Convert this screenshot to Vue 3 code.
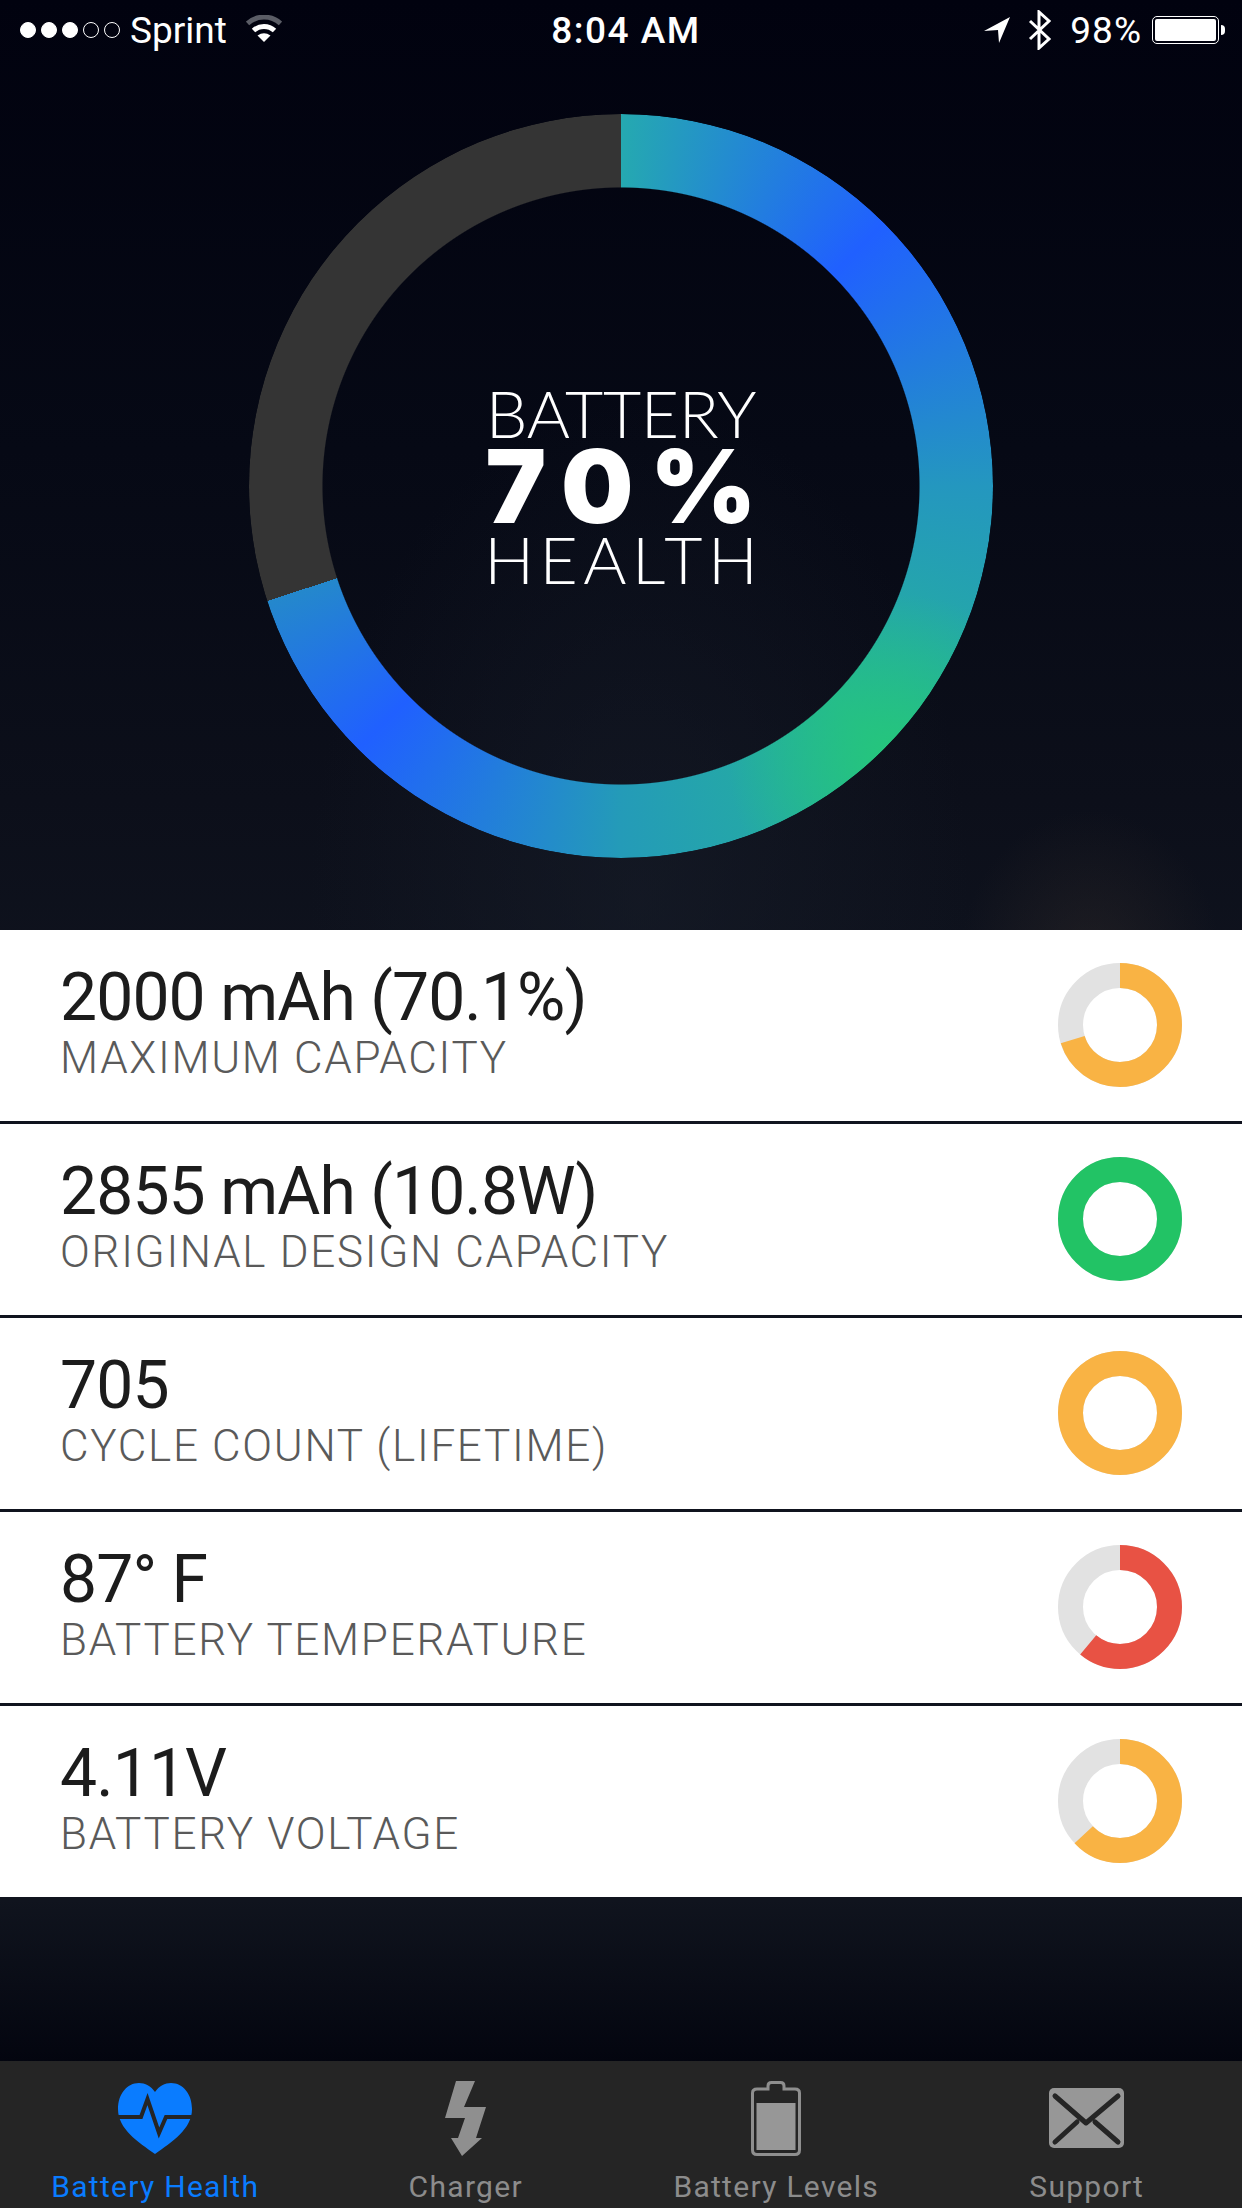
<script setup>
// Donut geometry shared by every row
const radius = 49.5
const circumference = 2 * Math.PI * radius

const rows = [
  { value: '2000 mAh (70.1%)', label: 'MAXIMUM CAPACITY', color: '#f9b344', percent: 70.1 },
  { value: '2855 mAh (10.8W)', label: 'ORIGINAL DESIGN CAPACITY', color: '#22c365', percent: 100 },
  { value: '705', label: 'CYCLE COUNT (LIFETIME)', color: '#f9b344', percent: 100 },
  { value: '87° F', label: 'BATTERY TEMPERATURE', color: '#e85244', percent: 61 },
  { value: '4.11V', label: 'BATTERY VOLTAGE', color: '#f9b344', percent: 63 },
]

function dash(percent) {
  const len = (percent / 100) * circumference
  return `${len} ${circumference - len}`
}
</script>

<template>
  <div class="page">
    <header class="status">
      <div class="status__left">
        <span class="dots">
          <i v-for="n in 3" :key="n" class="dot dot--on"></i>
          <i v-for="n in 2" :key="n" class="dot"></i>
        </span>
        <span class="carrier">Sprint</span>
        <svg class="wifi" width="36" height="27" viewBox="0 0 36 27">
          <path d="M1.5 8.5A24.5 24.5 0 0 1 34.5 8.5" fill="none" stroke="#5b5d66" stroke-width="5" />
          <path d="M7.5 15.5A15.5 15.5 0 0 1 28.5 15.5" fill="none" stroke="#fff" stroke-width="5" />
          <path d="M18 27L11.5 20.5Q18 16 24.5 20.5Z" fill="#fff" />
        </svg>
      </div>
      <div class="status__time">8:04 AM</div>
      <div class="status__right">
        <svg width="26" height="26" viewBox="0 0 26 26">
          <path d="M0 14L26 0L15 26L14 13Z" fill="#fff" />
        </svg>
        <svg class="bt" width="24" height="40" viewBox="0 0 24 40">
          <path d="M2 11L21 29L11 38V2L21 11L2 29" fill="none" stroke="#fff" stroke-width="3" />
        </svg>
        <span class="pct">98%</span>
        <span class="batt"><span class="batt__fill"></span></span>
        <span class="batt__nub"></span>
      </div>
    </header>

    <section class="hero">
      <div class="ring">
        <div class="ring__text">
          <div class="ring__line">BATTERY</div>
          <div class="ring__num">70%</div>
          <div class="ring__line ring__line--bottom">HEALTH</div>
        </div>
      </div>
    </section>

    <ul class="list">
      <li v-for="row in rows" :key="row.label" class="row">
        <div class="row__text">
          <div class="row__value">{{ row.value }}</div>
          <div class="row__label">{{ row.label }}</div>
        </div>
        <svg class="donut" width="124" height="124" viewBox="0 0 124 124">
          <circle cx="62" cy="62" :r="radius" fill="none" stroke="#e2e2e2" stroke-width="25" />
          <circle
            cx="62"
            cy="62"
            :r="radius"
            fill="none"
            :stroke="row.color"
            stroke-width="25"
            :stroke-dasharray="dash(row.percent)"
            transform="rotate(-90 62 62)"
          />
        </svg>
      </li>
    </ul>

    <div class="spacer"></div>

    <nav class="tabs">
      <div class="tab tab--active">
        <div class="tab__icon">
          <svg width="74" height="71" viewBox="0 0 74 71">
            <path d="M37 9C33 3 27 0 21 0C9 0 0 11 0 26C0 46 20 59 37 71C54 59 74 46 74 26C74 11 65 0 53 0C47 0 41 3 37 9Z" fill="#0a7cff" />
            <path d="M-1 34H23L29.500 16L41 50L48 34H75" fill="none" stroke="#252525" stroke-width="4" />
          </svg>
        </div>
        <span class="tab__label">Battery Health</span>
      </div>
      <div class="tab">
        <div class="tab__icon">
          <svg width="41" height="75" viewBox="0 0 41 75">
            <path d="M11 0H30L19 26H41L31 57H37L17 75L6 57H13L20 37H0Z" fill="#8f8f8f" />
          </svg>
        </div>
        <span class="tab__label">Charger</span>
      </div>
      <div class="tab">
        <div class="tab__icon">
          <svg width="50" height="75" viewBox="0 0 50 75">
            <path d="M6 8H17V5Q17 1.500 20.500 1.500H29.500Q33 1.500 33 5V8H44Q48.500 8 48.500 12V69Q48.500 73.500 44 73.500H6Q1.500 73.500 1.500 69V12Q1.500 8 6 8Z" fill="none" stroke="#8f8f8f" stroke-width="3" />
            <rect x="5.500" y="22" width="39" height="47" fill="#979797" />
          </svg>
        </div>
        <span class="tab__label">Battery Levels</span>
      </div>
      <div class="tab">
        <div class="tab__icon">
          <svg width="75" height="60" viewBox="0 0 75 60">
            <rect width="75" height="60" rx="5" fill="#979797" />
            <path d="M6 8L37 35L69 8M6 54L28 34M69 54L46 34" fill="none" stroke="#252525" stroke-width="5" stroke-linecap="round" stroke-linejoin="round" />
          </svg>
        </div>
        <span class="tab__label">Support</span>
      </div>
    </nav>
  </div>
</template>

<style scoped>
.page {
  width: 1242px;
  height: 2208px;
  display: flex;
  flex-direction: column;
  font-family: Roboto, "Liberation Sans", sans-serif;
  background:
    radial-gradient(ellipse 130px 150px at 1090px 960px, rgba(60, 50, 45, 0.35), transparent),
    radial-gradient(ellipse 330px 500px at 640px 900px, rgba(24, 30, 42, 0.55), transparent),
    linear-gradient(180deg, #01020f 0, #060915 450px, #0c0f1a 800px, #0f131e 1000px, #10141e 1900px, #03050f 2061px);
}

/* ── Barra de estado ─────────────────────────────────────── */
.status {
  height: 60px;
  flex: none;
  display: grid;
  grid-template-columns: 1fr auto 1fr;
  align-items: center;
  color: #fff;
  font-size: 37px;
}

.status__left {
  display: flex;
  align-items: center;
  padding-left: 20px;
}

.dots {
  display: flex;
  gap: 5px;
}

.dot {
  width: 16px;
  height: 16px;
  box-sizing: border-box;
  border: 1.5px solid #fff;
  border-radius: 50%;
}

.dot--on {
  background: #fff;
}

.carrier {
  margin-left: 10px;
  font-weight: 400;
}

.wifi {
  margin-left: 19px;
  margin-top: -3px;
}

.status__time {
  font-weight: 500;
  font-size: 37px;
  letter-spacing: 1.5px;
  margin-left: 10px;
}

.status__right {
  display: flex;
  align-items: center;
  justify-content: flex-end;
  padding-right: 17px;
}

.bt {
  margin-left: 18px;
  margin-right: 18px;
}

.pct {
  font-weight: 400;
  letter-spacing: 1px;
}

.batt {
  margin-left: 10px;
  width: 67px;
  height: 28px;
  box-sizing: border-box;
  border: 1.5px solid #fff;
  border-radius: 5px;
  padding: 2px;
  display: flex;
}

.batt__fill {
  flex: 1;
  background: #fff;
  border-radius: 2px;
}

.batt__nub {
  width: 4px;
  height: 10px;
  margin-left: 2px;
  background: #fff;
  border-radius: 0 4px 4px 0;
}

/* ── Anillo ──────────────────────────────────────────────── */
.hero {
  height: 870px;
  flex: none;
  display: flex;
  justify-content: center;
  padding-top: 54px;
  box-sizing: border-box;
}

.ring {
  position: relative;
  width: 744px;
  height: 744px;
  display: flex;
  align-items: center;
  justify-content: center;
}

.ring::before {
  content: "";
  position: absolute;
  inset: 0;
  border-radius: 50%;
  background:
    radial-gradient(circle 170px at 650px 650px, rgba(37, 200, 120, 0.95), rgba(37, 200, 120, 0) 100%),
    conic-gradient(
      #25a9b0 0deg,
      #2060ff 45deg,
      #2497bf 90deg,
      #25b596 135deg,
      #249bb8 180deg,
      #2060ff 225deg,
      #2488cc 252deg,
      #343434 252deg,
      #343434 360deg
    );
  -webkit-mask: radial-gradient(circle closest-side, transparent 80.1%, #000 80.4%);
  mask: radial-gradient(circle closest-side, transparent 80.1%, #000 80.4%);
}

.ring__text {
  position: relative;
  width: 400px;
  color: #fff;
  font-family: Lato, "Open Sans", sans-serif;
  text-align: center;
}

.ring__line {
  font-weight: 300;
  font-size: 66px;
  line-height: 58px;
  letter-spacing: -0.3px;
  white-space: nowrap;
}

.ring__line--bottom {
  letter-spacing: 5.5px;
  margin-right: -5.5px;
}

.ring__num {
  font-family: Inter, sans-serif;
  font-weight: 900;
  font-size: 102px;
  line-height: 88px;
  letter-spacing: 16.5px;
  margin-right: -16.5px;
  white-space: nowrap;
}

/* ── Lista ───────────────────────────────────────────────── */
.list {
  list-style: none;
  margin: 0;
  padding: 0;
  flex: none;
  display: flex;
  flex-direction: column;
  gap: 3px;
}

.row {
  height: 191px;
  box-sizing: border-box;
  padding: 0 60px;
  background: #fff;
  display: flex;
  align-items: center;
  justify-content: space-between;
}

.row__text {
  margin-top: -6px;
}

.row__value {
  font-size: 66px;
  font-weight: 400;
  line-height: 70px;
  letter-spacing: -0.9px;
  color: #1c1c1c;
  white-space: nowrap;
}

.row__label {
  font-size: 44px;
  font-weight: 300;
  line-height: 50px;
  letter-spacing: 1.7px;
  color: #5a5a5a;
  white-space: nowrap;
}

.donut {
  flex: none;
  margin-top: -2px;
}

.spacer {
  flex: 1;
}

/* ── Pestañas ────────────────────────────────────────────── */
.tabs {
  height: 147px;
  flex: none;
  background: #252525;
  display: grid;
  grid-template-columns: repeat(4, 1fr);
}

.tab {
  display: flex;
  flex-direction: column;
  align-items: center;
  color: #8c8c8c;
}

.tab--active {
  color: #0a7cff;
}

.tab__icon {
  height: 78px;
  margin-top: 18px;
  display: flex;
  align-items: center;
  justify-content: center;
}

.tab__label {
  font-size: 30px;
  line-height: 36px;
  margin-top: 12px;
  letter-spacing: 1.3px;
  white-space: nowrap;
}
</style>
